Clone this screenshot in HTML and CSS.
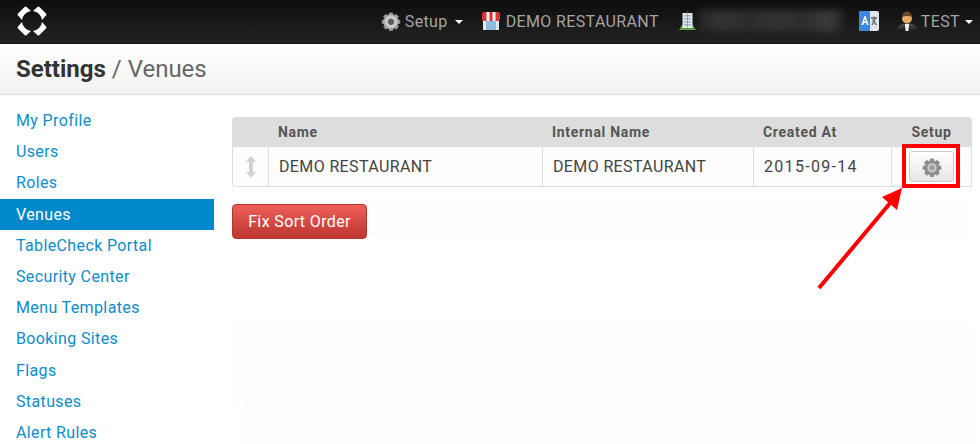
FILE: index.html
```html
<!DOCTYPE html>
<html lang="en">
<head>
<meta charset="utf-8">
<title>Settings / Venues</title>
<link rel="stylesheet" href="styles.css">
</head>
<body>
<header class="navbar">
  <svg class="logo" width="30" height="30" viewBox="0 0 30 30"><defs><path id="lp" d="M7.600 1 Q8.600 0 9.600 1 L14 5 A10.300 10.300 0 0 0 5 14 L1 9.600 Q0 8.600 1 7.600 Z"/></defs><g fill="#fff"><use href="#lp"/><use href="#lp" transform="matrix(-1 0 0 1 30 0)"/><use href="#lp" transform="matrix(1 0 0 -1 0 30)"/><use href="#lp" transform="matrix(-1 0 0 -1 30 30)"/></g></svg>
  <nav class="nav-right">
    <a class="nav-item setup">
      <svg class="ic" width="20" height="20" viewBox="0 0 20 20"><defs><radialGradient id="g1"><stop offset="0" stop-color="#555"/><stop offset=".32" stop-color="#666"/><stop offset=".45" stop-color="#ddd"/><stop offset="1" stop-color="#8a8a8a"/></radialGradient></defs><path fill="url(#g1)" stroke="url(#g1)" stroke-linejoin="round" d="M8.500 2h3l.4 2 1.500.6 1.800-1.200 2.200 2.200-1.200 1.800.6 1.500 2 .4v3l-2 .4-.6 1.500 1.200 1.800-2.200 2.200-1.800-1.200-1.500.6-.4 2h-3l-.4-2-1.500-.6-1.800 1.200-2.200-2.200 1.200-1.800-.6-1.500-2-.4v-3l2-.4.6-1.500-1.200-1.800 2.200-2.200 1.800 1.200 1.500-.6z"/></svg>
      <span>Setup</span><i class="caret"></i>
    </a>
    <a class="nav-item venue">
      <svg class="ic-wide" width="20" height="20" viewBox="0 0 20 20"><rect x="2" y="8" width="16" height="11" fill="#dfe8ee"/><rect x="5" y="10" width="10" height="9" fill="#8fbbe0"/><rect x="1" y="1" width="18" height="9" rx="2" fill="#d9323a"/><path d="M5.500 1h3v9h-3zM11.500 1h3v9h-3z" fill="#f3f0ee"/></svg>
      <span>DEMO RESTAURANT</span>
    </a>
    <a class="nav-item building">
      <svg class="ic-b" width="17" height="20" viewBox="0 0 17 20"><path d="M0 19l3-5h11l3 5z" fill="#5ca04a"/><rect x="3.500" y="2" width="10" height="15" fill="#e2e8ea"/><path d="M5 4h7v1.500H5zM5 7h7v1.500H5zM5 10h7v1.500H5zM5 13h7v1.500H5z" fill="#9dbccf"/><rect x="8" y="0" width="1" height="20" fill="#c44" opacity=".5"/></svg>
      <span class="blurred"></span>
    </a>
    <a class="nav-item translate">
      <svg width="20" height="20" viewBox="0 0 20 20"><rect width="20" height="20" rx="2" fill="#dfe5ea"/><path d="M2 0h9v20H2a2 2 0 0 1-2-2V2a2 2 0 0 1 2-2z" fill="#3f86e0"/><path d="M5.500 5 2.300 14h1.800l.6-2h2.600l.6 2h1.800L6.500 5zm-.4 5.600.9-3 .9 3z" fill="#fff"/><path d="M12 7h6M15 5.500V7M13 14l3.500-7M13.500 8.500 17.500 14" stroke="#5d6a72" stroke-width="1.300" fill="none"/></svg>
    </a>
    <a class="nav-item user">
      <svg class="ic" width="20" height="20" viewBox="0 0 20 20"><defs><linearGradient id="g2" x1="0" y1="0" x2="0" y2="1"><stop offset="0" stop-color="#555"/><stop offset="1" stop-color="#1a1a1a"/></linearGradient></defs><path d="M0 20c0-5 3-7.500 10-7.500s10 2.500 10 7.500z" fill="url(#g2)"/><path d="M8 13h4l-.6 7H8.600z" fill="#f5f5f5"/><circle cx="10" cy="7.500" r="5" fill="#e8a868"/><path d="M5 6.500C5 2 8 .5 10 .5s5 1.500 5 6c-1.500-2-8.500-2-10 0z" fill="#6b4a2c"/></svg>
      <span>TEST</span><i class="caret"></i>
    </a>
  </nav>
</header>

<div class="pagehead">
  <h1 class="title"><b>Settings</b> <span class="crumb">/ Venues</span></h1>
</div>

<div class="body">
  <ul class="sidebar">
    <li><a>My Profile</a></li>
    <li><a>Users</a></li>
    <li><a>Roles</a></li>
    <li class="active"><a>Venues</a></li>
    <li><a>TableCheck Portal</a></li>
    <li><a>Security Center</a></li>
    <li><a>Menu Templates</a></li>
    <li><a>Booking Sites</a></li>
    <li><a>Flags</a></li>
    <li><a>Statuses</a></li>
    <li><a>Alert Rules</a></li>
  </ul>
  <main class="content">
    <div class="ghost ghost-a"></div>
    <div class="ghost ghost-b"></div>
    <div class="ghost ghost-c"></div>
    <table class="venues">
      <thead>
        <tr>
          <th class="c-sort"></th>
          <th class="c-name">Name</th>
          <th class="c-int">Internal Name</th>
          <th class="c-date">Created At</th>
          <th class="c-setup">Setup</th>
        </tr>
      </thead>
      <tbody>
        <tr>
          <td class="c-sort">
            <svg width="12" height="24" viewBox="0 0 12 24"><path d="M6 1l5 6H8v10h3l-5 6-5-6h3V7H1z" fill="#d2d2d2"/></svg>
          </td>
          <td>DEMO RESTAURANT</td>
          <td>DEMO RESTAURANT</td>
          <td class="date">2015-09-14</td>
          <td class="c-setup">
            <span class="gear-btn">
              <svg width="20" height="20" viewBox="0 0 20 20"><defs><radialGradient id="g3"><stop offset="0" stop-color="#999"/><stop offset=".28" stop-color="#a5a5a5"/><stop offset=".42" stop-color="#d8d8d8"/><stop offset=".6" stop-color="#8c8c8c"/><stop offset="1" stop-color="#8a8a8a"/></radialGradient></defs><path fill="url(#g3)" stroke="url(#g3)" stroke-linejoin="round" d="M8.500 2h3l.4 2 1.500.6 1.800-1.200 2.200 2.200-1.200 1.800.6 1.500 2 .4v3l-2 .4-.6 1.500 1.200 1.800-2.200 2.200-1.800-1.200-1.500.6-.4 2h-3l-.4-2-1.500-.6-1.800 1.200-2.200-2.200 1.200-1.800-.6-1.500-2-.4v-3l2-.4.6-1.500-1.200-1.800 2.200-2.200 1.800 1.200 1.500-.6z"/></svg>
            </span>
          </td>
        </tr>
      </tbody>
    </table>
    <button class="btn-danger" type="button">Fix Sort Order</button>
  </main>
</div>

<div class="callout-box"></div>
<svg class="callout-arrow" width="110" height="120" viewBox="0 0 110 120"><path d="M11 108 L83 22" stroke="#f00" stroke-width="4" fill="none"/><path d="M94 8 L74 17 L89 30 Z" fill="#f00"/></svg>
```
FILE: styles.css
```css
* { box-sizing: border-box; }
html, body { margin: 0; height: 444px; overflow: hidden; }
body {
  position: relative;
  background: #fff;
  font-family: Roboto, "Liberation Sans", sans-serif;
  font-size: 16px;
  letter-spacing: .37px;
  color: #333;
}
.navbar {
  height: 44px;
  display: flex;
  align-items: center;
  justify-content: space-between;
  padding: 0 7px 1px 17px;
  background: linear-gradient(#0e0e0e, #222);
  border-bottom: 1px solid #111;
}
.nav-right { display: flex; align-items: center; }
.nav-item { display: flex; align-items: center; color: #a4a4a4; }
.ic { margin-right: 4px; }
.ic-wide { margin-right: 5px; }
.ic-b { margin-right: 3px; }
.setup { margin-right: 18px; }
.venue { margin-right: 20px; }
.building { margin-right: 15px; }
.translate { margin-right: 18px; }
.caret {
  width: 0; height: 0;
  margin-left: 7px;
  margin-top: 2px;
  border-left: 4px solid transparent;
  border-right: 4px solid transparent;
  border-top: 4px solid #fff;
}
.user .caret { margin-left: 5px; }
.blurred {
  display: block;
  width: 145px;
  height: 22px;
  background: linear-gradient(90deg, #262626, #333 15%, #2b2b2b 35%, #333 55%, #2c2c2c 70%, #3a3a3a 90%, #222);
  filter: blur(3px);
}
.pagehead {
  height: 51px;
  padding: 0 16px;
  display: flex;
  align-items: center;
  background: linear-gradient(#fff, #f2f2f2);
  border-bottom: 1px solid #ddd;
}
.title { margin: 0; font-size: 24px; font-weight: 400; line-height: 1; letter-spacing: 0; color: #666; }
.title b { color: #333; font-weight: 700; }
.body { display: flex; align-items: flex-start; padding-top: 10px; }
.sidebar { list-style: none; margin: 0; padding: 0; width: 214px; flex: none; }
.sidebar li { height: 31.2px; display: flex; align-items: center; padding-left: 16px; color: #0e8ccb; }
.sidebar li.active { background: #0088cc; color: #fff; }
.content { flex: 1; padding: 12px 8px 0 18px; position: relative; }
.venues {
  position: relative;
  width: 740px;
  border-collapse: separate;
  border-spacing: 0;
  table-layout: fixed;
  font-size: 16px;
}
.venues th {
  height: 30px;
  padding: 0 0 0 10px;
  background: #ddd;
  text-align: left;
  font-size: 14px;
  font-weight: 700;
  letter-spacing: .7px;
  color: #555;
}
.venues th:first-child { border-top-left-radius: 4px; }
.venues th:last-child { border-top-right-radius: 4px; }
.venues td {
  height: 40px;
  padding: 0 0 0 10px;
  background: #fdfdfd;
  border-left: 1px solid #ddd;
  border-bottom: 1px solid #ddd;
  color: #444;
}
.venues td:last-child { border-right: 1px solid #ddd; }
.venues td:first-child { border-bottom-left-radius: 4px; }
.venues .c-sort { width: 36px; padding: 0; text-align: center; }
.venues .c-sort svg { display: block; margin: 0 auto; }
.c-name { width: 274px; }
.c-int { width: 211px; }
.c-date { width: 138px; }
.venues .c-setup { padding: 0; text-align: center; }
.venues .date { letter-spacing: 1.3px; }
.gear-btn {
  display: inline-flex;
  align-items: center;
  justify-content: center;
  width: 45px;
  height: 31px;
  vertical-align: middle;
  border: 1px solid #ccc;
  border-radius: 3px;
  background: linear-gradient(#fff, #e6e6e6);
}
.btn-danger {
  position: relative;
  display: block;
  width: 135px;
  height: 35px;
  margin-top: 17px;
  padding: 0;
  font: inherit;
  letter-spacing: .37px;
  color: #fff;
  background: linear-gradient(#ee5f5b, #bd362f);
  border: 1px solid #b8352e;
  border-radius: 4px;
}
.ghost { position: absolute; background: #fdfdfd; }
.ghost-a { left: 18px; right: 8px; top: 92px; height: 40px; background: #fefefe; }
.ghost-b { left: 18px; right: 8px; top: 220px; height: 78px; }
.ghost-c { left: 28px; right: 8px; top: 298px; height: 60px; }
.callout-box {
  position: absolute;
  left: 902px;
  top: 144px;
  width: 58px;
  height: 44px;
  border: 4px solid #f00;
}
.callout-arrow { position: absolute; left: 808px; top: 180px; }
```
